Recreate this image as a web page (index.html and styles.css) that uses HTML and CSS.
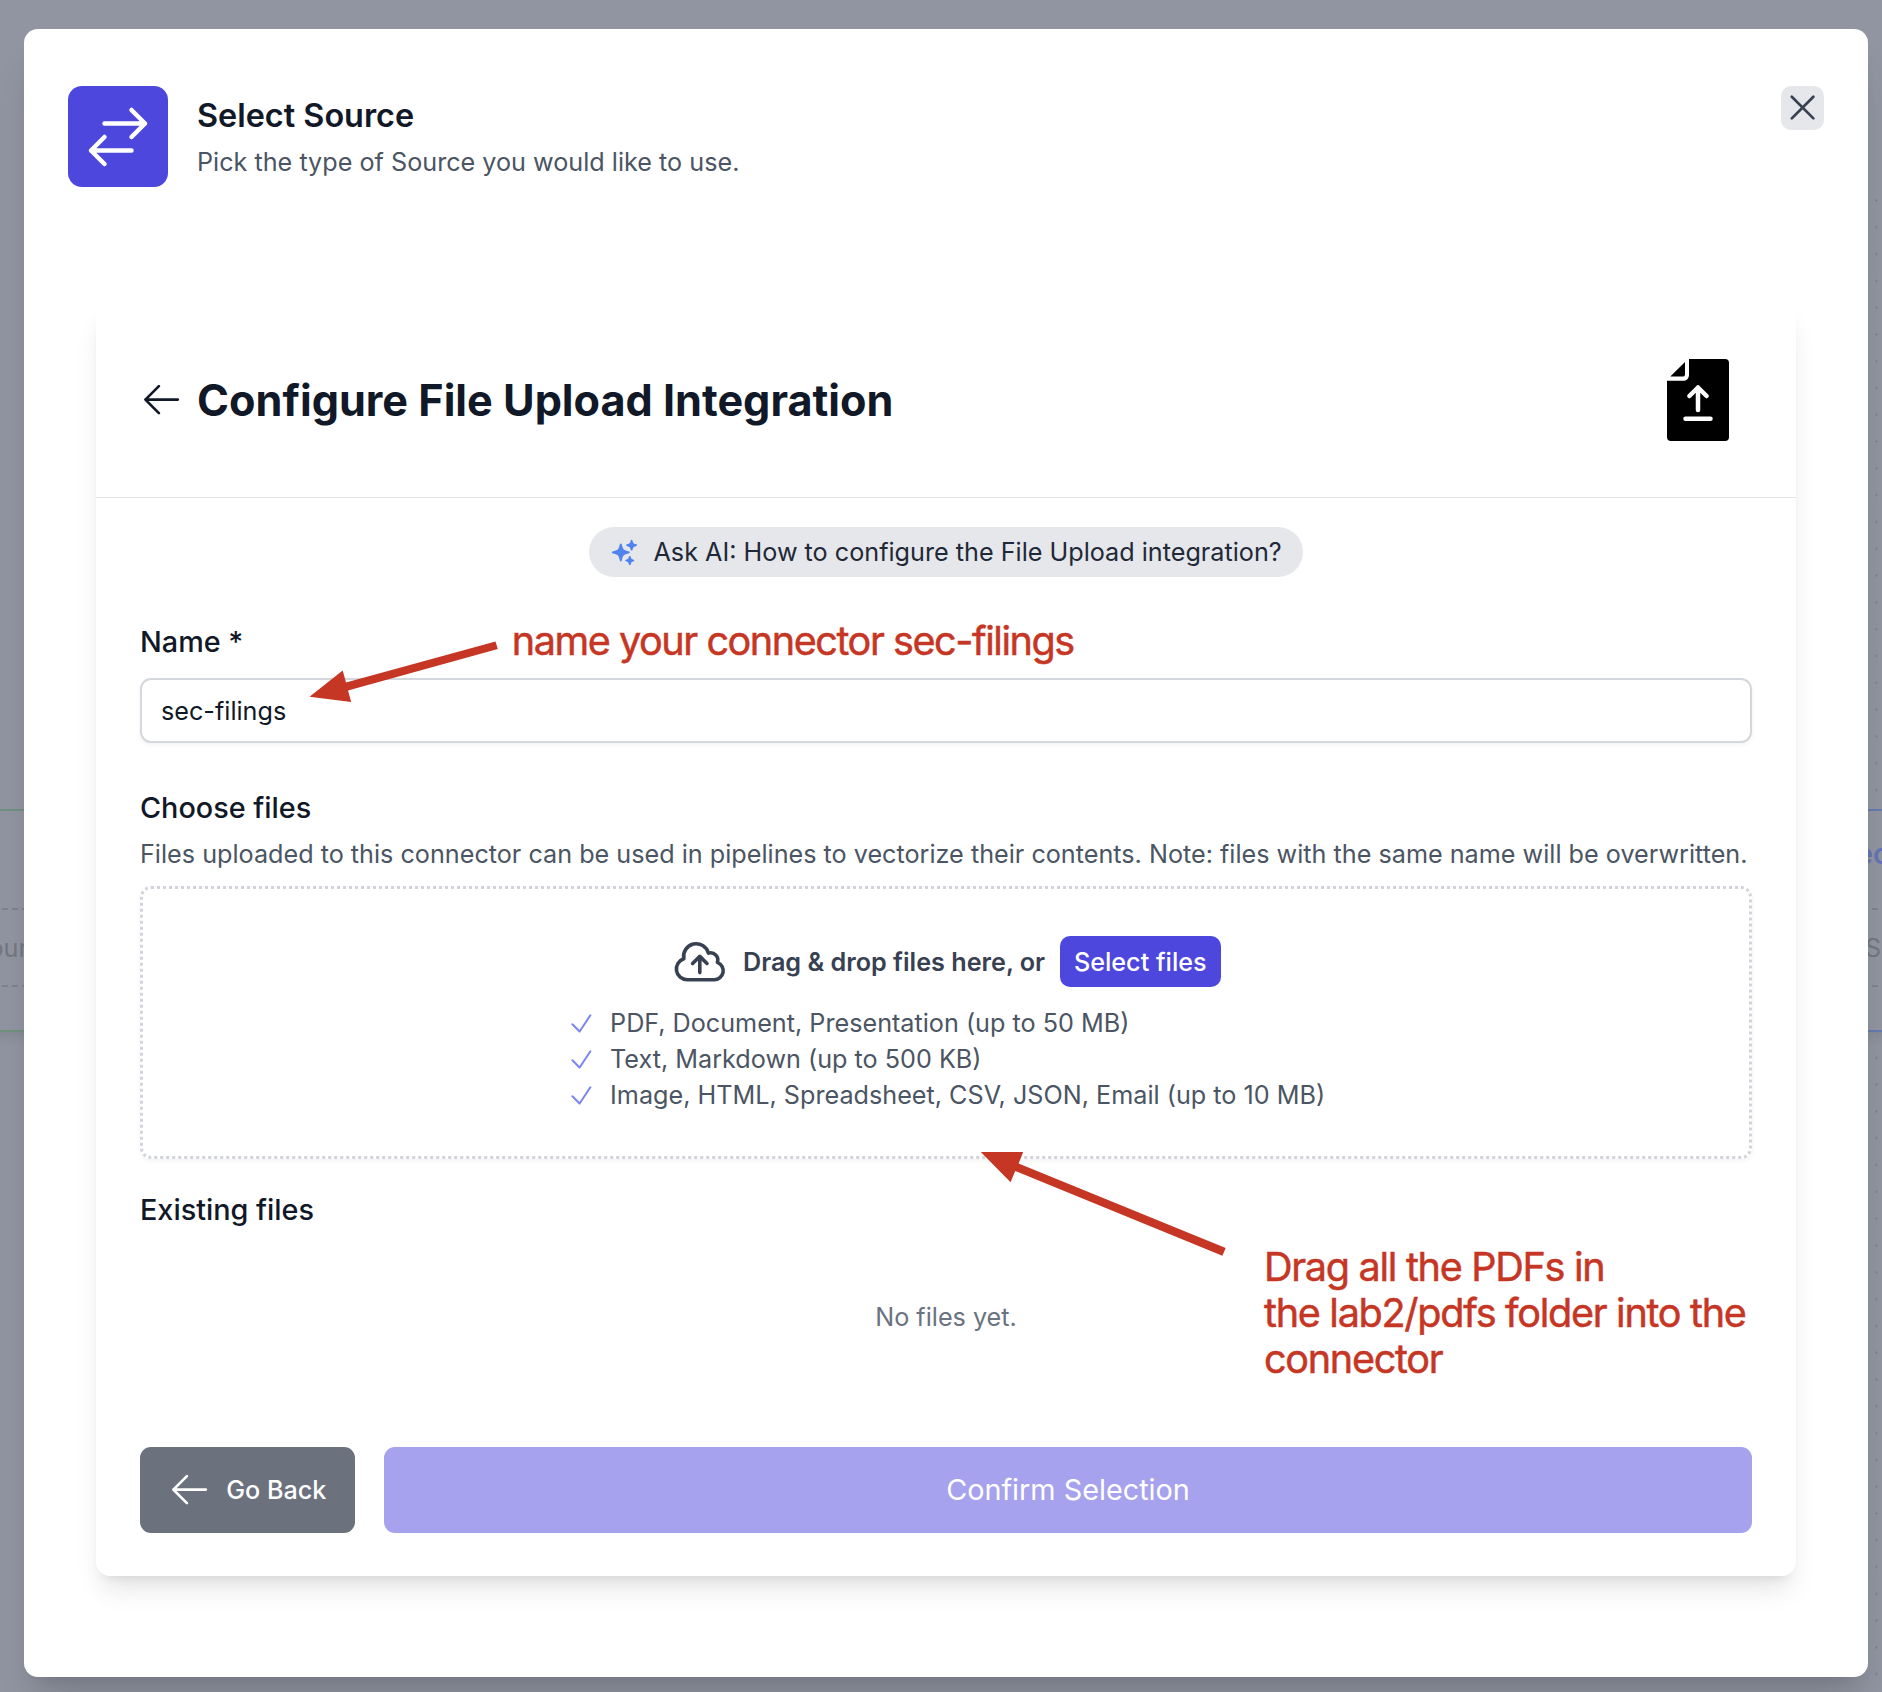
FILE: index.html
```html
<!DOCTYPE html>
<html lang="en">
<head>
<meta charset="utf-8">
<title>Select Source</title>
<link rel="stylesheet" href="styles.css">
</head>
<body>
<div class="canvas" aria-hidden="true">
  <div class="dots"></div>
  <div class="node node-source">
    <div class="node-head"></div>
    <div class="node-body">our</div>
    <div class="node-foot"></div>
  </div>
  <div class="node node-vector">
    <div class="node-head">ec</div>
    <div class="node-body">S</div>
    <div class="node-foot"></div>
  </div>
</div>

<main class="modal">
  <header class="modal-header">
    <div class="badge">
      <svg class="badge-icon line-icon" viewBox="0 0 24 24"><path d="M7.5 21 3 16.5m0 0L7.5 12M3 16.5h13.5m0-13.5L21 7.5m0 0L16.5 12M21 7.5H7.5"/></svg>
    </div>
    <div class="heading">
      <h1 class="modal-title">Select Source</h1>
      <p class="modal-subtitle">Pick the type of Source you would like to use.</p>
    </div>
    <button class="close" aria-label="Close">
      <svg class="icon line-icon" viewBox="0 0 24 24"><path d="M6 18 18 6M6 6l12 12"/></svg>
    </button>
  </header>

  <section class="card">
    <div class="card-header">
      <svg class="icon line-icon" viewBox="0 0 24 24"><path d="M10.5 19.5 3 12m0 0 7.5-7.5M3 12h18"/></svg>
      <h2 class="card-title">Configure File Upload Integration</h2>
      <svg class="file-icon" viewBox="0 0 62 82">
        <path d="M22 0H58a4 4 0 0 1 4 4V78a4 4 0 0 1-4 4H4a4 4 0 0 1-4-4V21.8H16.5a5.5 5.5 0 0 0 5.5-5.5Z"/>
        <path d="M3.3 17.6 18 3V15.4a2.2 2.2 0 0 1-2.2 2.2Z"/>
        <path class="file-arrow" d="M31 51V28.5M22.4 37 31 28.5 39.6 37M18.5 59.7h25"/>
      </svg>
    </div>

    <div class="card-body">
      <button class="ask">
        <svg class="icon-sm ask-icon" viewBox="0 0 24 24"><path d="M9 4.5a.75.75 0 0 1 .721.544l.813 2.846a3.75 3.75 0 0 0 2.576 2.576l2.846.813a.75.75 0 0 1 0 1.442l-2.846.813a3.75 3.75 0 0 0-2.576 2.576l-.813 2.846a.75.75 0 0 1-1.442 0l-.813-2.846a3.75 3.75 0 0 0-2.576-2.576l-2.846-.813a.75.75 0 0 1 0-1.442l2.846-.813A3.75 3.75 0 0 0 7.466 7.89l.813-2.846A.75.75 0 0 1 9 4.5ZM18 1.5a.75.75 0 0 1 .728.568l.258 1.036c.236.94.97 1.674 1.91 1.91l1.036.258a.75.75 0 0 1 0 1.456l-1.036.258c-.94.236-1.674.97-1.91 1.91l-.258 1.036a.75.75 0 0 1-1.456 0l-.258-1.036a2.625 2.625 0 0 0-1.91-1.91l-1.036-.258a.75.75 0 0 1 0-1.456l1.036-.258a2.625 2.625 0 0 0 1.91-1.91l.258-1.036A.75.75 0 0 1 18 1.5ZM16.5 15a.75.75 0 0 1 .712.513l.394 1.183c.15.447.5.799.948.948l1.183.395a.75.75 0 0 1 0 1.422l-1.183.395c-.447.15-.799.5-.948.948l-.395 1.183a.75.75 0 0 1-1.424 0l-.395-1.183a1.5 1.5 0 0 0-.948-.948l-1.183-.395a.75.75 0 0 1 0-1.422l1.183-.395c.447-.15.799-.5.948-.948l.395-1.183A.75.75 0 0 1 16.5 15Z"/></svg>
        <span>Ask AI: How to configure the File Upload integration?</span>
      </button>

      <label class="label" for="name">Name *</label>
      <input class="input" id="name" type="text" value="sec-filings">

      <h3 class="label label-files">Choose files</h3>
      <p class="hint">Files uploaded to this connector can be used in pipelines to vectorize their contents. Note: files with the same name will be overwritten.</p>

      <div class="dropzone">
        <div class="drop-row">
          <svg class="icon-lg line-icon" viewBox="0 0 24 24"><path d="M12 16.5V9.75m0 0 3 3m-3-3-3 3M6.75 19.5a4.5 4.5 0 0 1-1.41-8.775 5.25 5.25 0 0 1 10.233-2.33 3 3 0 0 1 3.758 3.848A3.752 3.752 0 0 1 18 19.5H6.75Z"/></svg>
          <span class="drop-text">Drag &amp; drop files here, or</span>
          <button class="select">Select files</button>
        </div>
        <ul class="types">
          <li class="type"><svg class="icon-sm line-icon check" viewBox="0 0 24 24"><path d="m4.5 12.75 6 6 9-13.5"/></svg>PDF, Document, Presentation (up to 50 MB)</li>
          <li class="type"><svg class="icon-sm line-icon check" viewBox="0 0 24 24"><path d="m4.5 12.75 6 6 9-13.5"/></svg>Text, Markdown (up to 500 KB)</li>
          <li class="type"><svg class="icon-sm line-icon check" viewBox="0 0 24 24"><path d="m4.5 12.75 6 6 9-13.5"/></svg>Image, HTML, Spreadsheet, CSV, JSON, Email (up to 10 MB)</li>
        </ul>
      </div>

      <h3 class="label label-existing">Existing files</h3>
      <p class="empty">No files yet.</p>

      <div class="actions">
        <button class="back">
          <svg class="icon line-icon" viewBox="0 0 24 24"><path d="M10.5 19.5 3 12m0 0 7.5-7.5M3 12h18"/></svg>
          <span>Go Back</span>
        </button>
        <button class="confirm" disabled>Confirm Selection</button>
      </div>
    </div>
  </section>
</main>

<div class="annotations">
  <svg class="arrows" viewBox="0 0 1882 1692">
    <path d="M309.5 696.7 342.7 670.5 346 682.6 495.5 641.5 497.8 649 348 690.4 351.2 702Z"/>
    <path d="M980.8 1152H1023.2L1018.6 1163.5 1225.7 1248 1222.4 1255.8 1015.2 1171 1010.6 1182.2Z"/>
  </svg>
  <p class="note note-name">name your connector sec-filings</p>
  <p class="note note-files">Drag all the PDFs in<br>the lab2/pdfs folder into the<br>connector</p>
</div>
</body>
</html>
```
FILE: styles.css
```css
* { box-sizing: border-box; margin: 0; padding: 0; }

body {
  position: relative;
  width: 1882px;
  height: 1692px;
  overflow: hidden;
  padding: 29px 14px 15px 24px;
  background: #9195a1;
  font-family: Inter, "Liberation Sans", sans-serif;
  font-size: 25.2px;
  line-height: 36px;
  color: #111827;
}

button, input { font: inherit; border: 0; }
ul { list-style: none; }
svg { display: block; flex: none; }

.line-icon {
  fill: none;
  stroke: currentColor;
  stroke-width: 1.5;
  stroke-linecap: round;
  stroke-linejoin: round;
}
.icon { width: 43.2px; height: 43.2px; }
.icon-sm { width: 28.8px; height: 28.8px; }
.icon-lg { width: 57.6px; height: 57.6px; }

/* Pipeline canvas behind the dialog */
.canvas { position: absolute; inset: 0; overflow: hidden; }
.dots {
  position: absolute;
  left: 1862.6px;
  top: 186.6px;
  width: 26.8px;
  bottom: 0;
  background: radial-gradient(circle, #7d818c 0.8px, transparent 1.5px) 0 0 / 26.8px 26.8px;
}
.node {
  position: absolute;
  top: 809px;
  width: 420px;
  height: 223px;
  border: 2px solid;
  background: #9195a1;
  box-shadow: 0 7px 11px -2px rgba(0, 0, 0, .08);
}
.node-source { left: -380px; border-color: #70917f; }
.node-vector { left: 1840px; border-color: #667ab0; }
.node-head { height: 99px; padding: 25px 0 0 14px; font-weight: 600; font-size: 28.8px; color: #6376b2; border-bottom: 2px dashed #7f838e; }
.node-body { height: 77px; padding: 20px 23px; color: #737781; border-bottom: 2px dashed #7f838e; }
.node-source .node-body { text-align: right; padding-right: 10px; }

/* Dialog */
.modal {
  position: relative;
  width: 1844px;
  height: 1648px;
  padding: 57px 44px 0;
  border-radius: 14px;
  background: #fff;
  box-shadow: 0 36px 45px -9px rgba(0, 0, 0, .12), 0 14px 18px -11px rgba(0, 0, 0, .12);
}
.modal-header { display: flex; align-items: flex-start; height: 216px; }
.badge { padding: 15px 14px 14px; border-radius: 14px; background: #4e47dd; color: #fff; }
.badge-icon { width: 72px; height: 72px; }
.heading { flex: 1; padding: 5px 0 0 29px; }
.modal-title { font-size: 32.4px; line-height: 50px; font-weight: 600; }
.modal-subtitle { margin-top: 3px; color: #4b5563; }
.close { width: 43px; height: 44px; border-radius: 10px; background: #e5e7eb; color: #374151; }

.card {
  height: 1274px;
  margin: 0 28px;
  border-radius: 14px;
  background: #fff;
  box-shadow: 0 18px 27px -5.4px rgba(0, 0, 0, .1), 0 7.2px 10.8px -7px rgba(0, 0, 0, .1);
}
.card-header {
  display: flex;
  align-items: center;
  gap: 13.6px;
  height: 196px;
  padding: 0 67px 0 44.3px;
  border-bottom: 1px solid #e2e4e8;
}
.card-title { flex: 1; font-size: 43.2px; line-height: 58px; font-weight: 700; }
.file-icon { width: 62px; height: 82px; }
.file-arrow { fill: none; stroke: #fff; stroke-width: 4.5; stroke-linecap: round; stroke-linejoin: round; }

.card-body { display: flex; flex-direction: column; padding: 29px 44px 0; }
.ask {
  display: flex;
  align-items: center;
  gap: 14.4px;
  align-self: center;
  height: 50px;
  padding: 0 21.6px;
  border-radius: 25px;
  background: #e5e7eb;
  color: #1f2937;
}
.ask-icon { fill: #4f83ee; }
.label { margin-top: 43px; font-size: 28.8px; line-height: 43px; font-weight: 500; }
.input {
  height: 65px;
  margin-top: 15px;
  padding: 0 19px;
  border: 2px solid #d4d7dc;
  border-radius: 11px;
  background: #fff;
  color: #111827;
  box-shadow: 0 2px 4px rgba(0, 0, 0, .05);
}
.hint { margin-top: 7px; color: #4b5563; white-space: nowrap; }
.dropzone {
  display: flex;
  flex-direction: column;
  align-items: center;
  height: 273px;
  margin-top: 14px;
  padding-top: 44px;
  border: 3px dotted #d1d5db;
  border-radius: 11px;
  box-shadow: 0 2px 4px rgba(0, 0, 0, .05);
}
.drop-row { display: flex; align-items: center; gap: 14.4px; color: #374151; }
.drop-text { font-weight: 600; }
.select { height: 51px; padding: 0 14.4px; border-radius: 10px; background: #4e47dd; color: #fff; font-weight: 500; }
.types { margin-top: 14.4px; color: #4b5563; }
.type { display: flex; align-items: center; gap: 14.4px; }
.check { color: #7c86ee; stroke-width: 1.7; }
.label-existing { margin-top: 29px; }
.label-files { margin-top: 43px; }
.empty { margin-top: 68px; text-align: center; color: #6b7280; }

.actions { display: flex; gap: 29px; margin-top: 112px; }
.back {
  display: flex;
  align-items: center;
  gap: 15px;
  width: 215px;
  height: 86px;
  padding-left: 28px;
  border-radius: 11px;
  background: #6b727e;
  color: #fff;
  font-weight: 500;
}
.confirm { flex: 1; border-radius: 11px; background: #a6a2ee; color: #fff; font-size: 28.8px; }

/* Callouts drawn over the dialog */
.annotations { position: absolute; inset: 0; color: #c63624; }
.arrows { width: 1882px; height: 1692px; fill: currentColor; }
.note { position: absolute; font-size: 39.6px; line-height: 45.8px; letter-spacing: -1.45px; white-space: nowrap; -webkit-text-stroke: .5px currentColor; }
.note-name { left: 511.8px; top: 618.5px; }
.note-files { left: 1264px; top: 1245px; letter-spacing: -1.3px; }
```
